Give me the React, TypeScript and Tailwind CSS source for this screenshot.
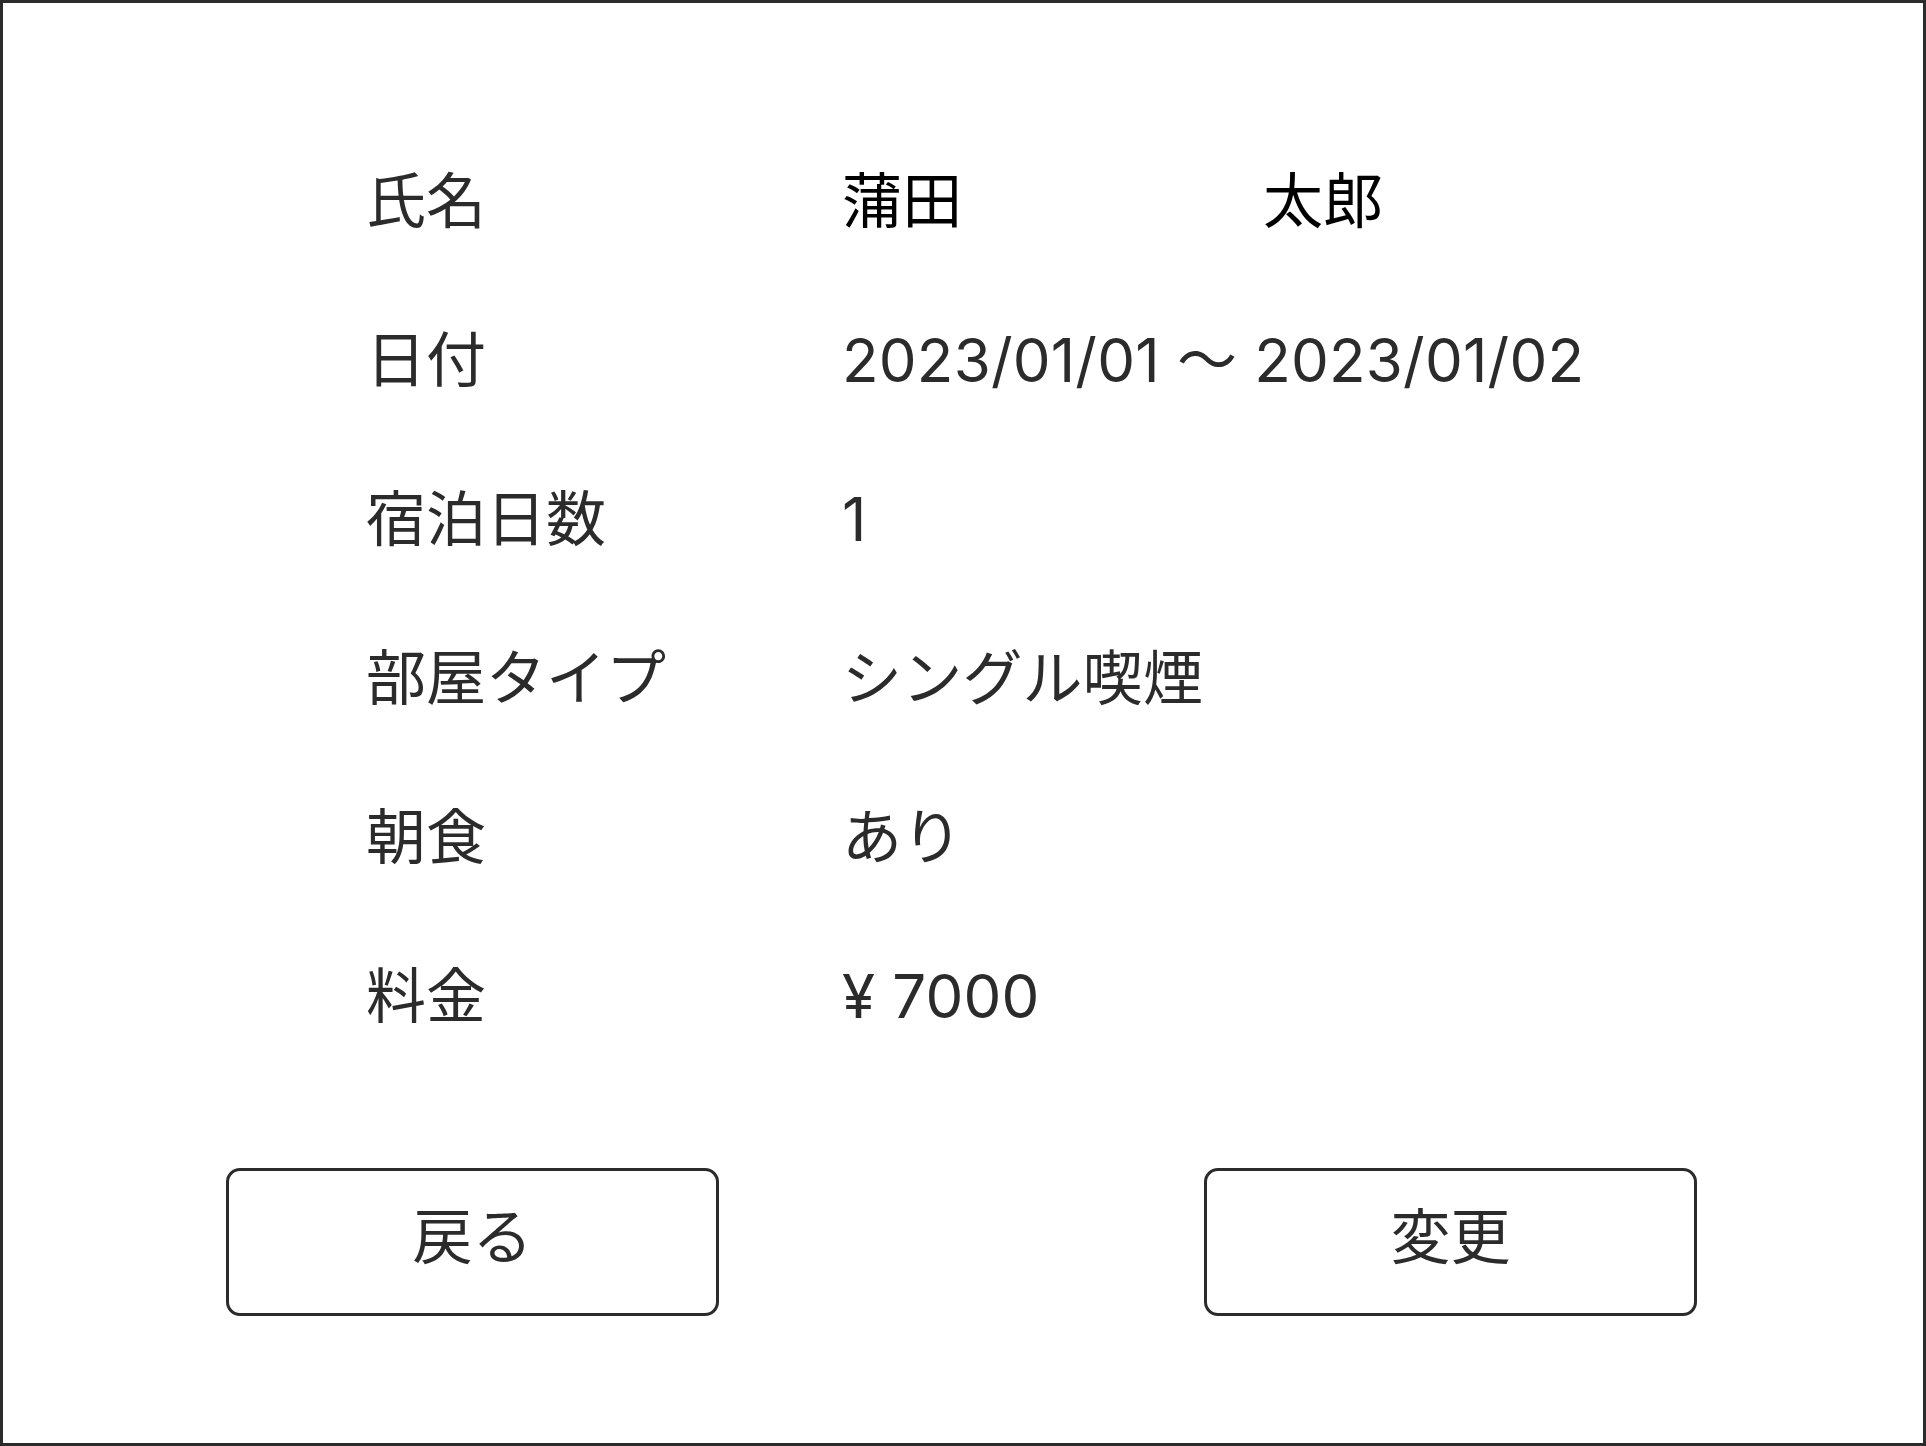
import React from "react";

const rows: { label: string; value: React.ReactNode }[] = [
  {
    label: "氏名",
    value: (
      <div className="flex text-black">
        <span className="w-[421px]">蒲田</span>
        <span>太郎</span>
      </div>
    ),
  },
  { label: "日付", value: "2023/01/01 ～ 2023/01/02" },
  { label: "宿泊日数", value: "1" },
  { label: "部屋タイプ", value: "シングル喫煙" },
  { label: "朝食", value: "あり" },
  { label: "料金", value: "¥ 7000" },
];

export default function App() {
  return (
    <div
      className="box-border flex h-[1446px] w-full flex-col border-[3px] border-[#2b2b2b] bg-white text-[#2b2b2b]"
      style={{ fontFamily: 'Inter, "Noto Sans CJK JP", sans-serif' }}
    >
      <div className="ml-[223px] mt-[118px] w-[1471px]">
        <div className="pl-[140px]">
          {rows.map((r) => (
            <div key={r.label} className="flex h-[159px] items-center text-[60px] leading-none">
              <div className="w-[476px]">{r.label}</div>
              <div className="tracking-[0.2px]">{r.value}</div>
            </div>
          ))}
        </div>

        <div className="mt-[93px] flex justify-between">
          <button className="flex h-[148px] w-[493px] items-center justify-center rounded-[14px] border-[3px] border-[#2b2b2b] bg-white pb-[10px] text-[60px] leading-none text-[#2b2b2b]">
            戻る
          </button>
          <button className="flex h-[148px] w-[493px] items-center justify-center rounded-[14px] border-[3px] border-[#2b2b2b] bg-white pb-[10px] text-[60px] leading-none text-[#2b2b2b]">
            変更
          </button>
        </div>
      </div>
    </div>
  );
}
